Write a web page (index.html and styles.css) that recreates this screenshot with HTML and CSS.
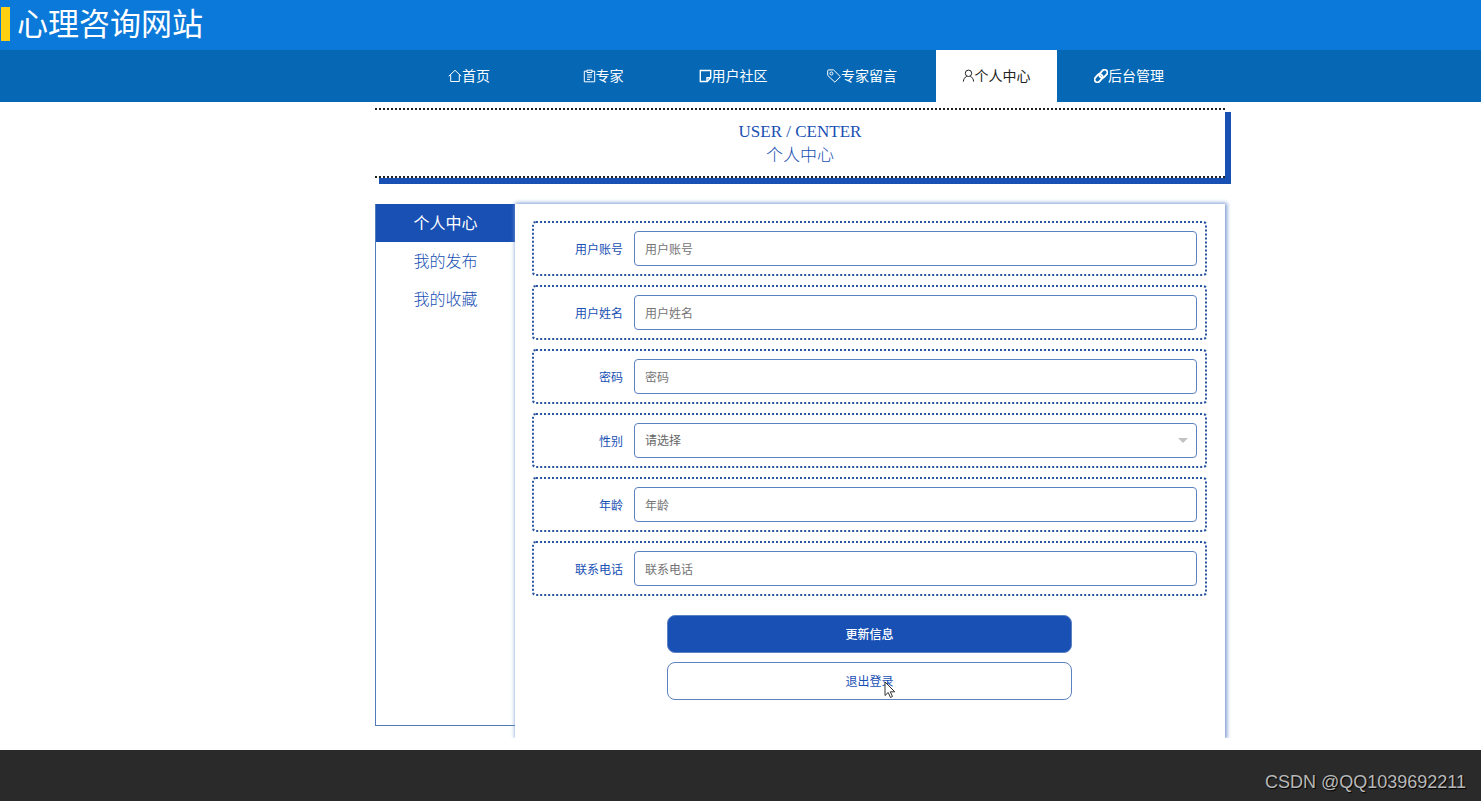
FILE: index.html
```
<!DOCTYPE html>
<html lang="zh-CN">
<head>
<meta charset="utf-8">
<meta name="viewport" content="width=device-width, initial-scale=1">
<title>心理咨询网站</title>
<link rel="stylesheet" href="styles.css">
</head>
<body>
<header class="site-header"><h1 class="site-title">心理咨询网站</h1></header>
<nav class="site-nav">
  <ul class="nav-list">
    <li><a class="nav-link" href="#"><svg class="icon" viewBox="0 0 14 14"><path d="M.7 7.200 7 1.300l6.300 5.900M2.700 6v6.500h8.600V6"/></svg>首页</a></li>
    <li><a class="nav-link" href="#"><svg class="icon icon-narrow" viewBox="0 0 13 14"><path d="M4 2.200H1.300v10.600h10.400V2.200H9M4 1.200h5v2.300H4zM4 5.800h5M4 8.100h5M4 10.400h3"/></svg>专家</a></li>
    <li><a class="nav-link" href="#"><svg class="icon icon-narrow icon-bold" viewBox="0 0 13 14"><path d="M1.300 1.500h10.400v7.400l-3.500 3.600H1.300zM8 12.300V8.800h3.600"/></svg>用户社区</a></li>
    <li><a class="nav-link" href="#"><svg class="icon" viewBox="0 0 14 14"><path d="M.7 1.900Q.7.900 1.700.9h4.800l6.900 6.800-5.500 5.500-7.200-6.800z"/><circle cx="4.400" cy="4.500" r="1.500"/></svg>专家留言</a></li>
    <li><a class="nav-link nav-link-active" href="#" aria-current="page"><svg class="icon icon-narrow" viewBox="0 0 13 14"><circle cx="6.500" cy="4.300" r="3.200"/><path d="M4.800 7.200C2.800 8.200 1.600 10 1.300 12.600M8.200 7.200c2 1 3.200 2.800 3.500 5.400"/></svg>个人中心</a></li>
    <li><a class="nav-link" href="#"><svg class="icon icon-heavy" viewBox="0 0 14 14"><g transform="rotate(-48 7 7)"><rect x="-.8" y="3.900" width="9" height="5.600" rx="2.800"/><rect x="5.800" y="4.500" width="9" height="5.600" rx="2.800"/></g></svg>后台管理</a></li>
  </ul>
</nav>
<main class="page">
  <div class="container">
    <div class="banner">
      <p class="banner-line">USER / CENTER</p>
      <h2 class="banner-line">个人中心</h2>
    </div>
    <div class="columns">
      <aside class="side">
        <a class="side-link side-link-active" href="#">个人中心</a>
        <a class="side-link" href="#">我的发布</a>
        <a class="side-link" href="#">我的收藏</a>
      </aside>
      <form class="panel">
        <div class="field"><label class="label" for="account">用户账号</label><input class="control" id="account" type="text" placeholder="用户账号"></div>
        <div class="field"><label class="label" for="name">用户姓名</label><input class="control" id="name" type="text" placeholder="用户姓名"></div>
        <div class="field"><label class="label" for="password">密码</label><input class="control" id="password" type="password" placeholder="密码"></div>
        <div class="field"><label class="label" for="gender">性别</label>
          <div class="select-box"><select class="control" id="gender"><option>请选择</option><option>男</option><option>女</option></select></div></div>
        <div class="field"><label class="label" for="age">年龄</label><input class="control" id="age" type="text" placeholder="年龄"></div>
        <div class="field"><label class="label" for="phone">联系电话</label><input class="control" id="phone" type="text" placeholder="联系电话"></div>
        <div class="actions">
          <button class="button button-primary" type="button">更新信息</button>
          <button class="button" type="button">退出登录<svg class="cursor" viewBox="0 0 12 18"><path d="M1 1v13.500l3.200-3 2.300 5 2-1-2.200-4.700H10.800z"/></svg></button>
        </div>
      </form>
    </div>
  </div>
</main>
<footer class="site-footer"><p class="credit">CSDN @QQ1039692211</p></footer>
</body>
</html>
```
FILE: styles.css
```
* { box-sizing: border-box; }

body {
  margin: 0;
  min-height: 100vh;
  display: flex;
  flex-direction: column;
  background: #fff;
  color: #1850b4;
  font: 12px/1.5 "Noto Sans CJK SC", sans-serif;
}

h1, h2, p, ul { margin: 0; padding: 0; font-weight: 400; }
a { color: inherit; text-decoration: none; }

.site-header {
  display: flex;
  align-items: center;
  height: 50px;
  padding: 0 1px 2px;
  background: #0a79d9;
}
.site-title {
  padding: 0 0 4px 7px;
  border-left: 9px solid #ffd012;
  color: #fff;
  font-size: 31px;
  line-height: 30px;
}

.site-nav {
  padding-left: 113px;
  background: #0668b5;
}
.nav-list {
  display: grid;
  grid-template-columns: 136px 132px 128px 130px 138px 128px;
  justify-content: center;
  list-style: none;
}
.nav-link {
  display: flex;
  align-items: center;
  justify-content: center;
  width: 121px;
  height: 52px;
  margin: 0 auto;
  padding-bottom: 1px;
  color: #fff;
  font-size: 14px;
}
.nav-link-active { background: #fff; color: #222; }

.icon {
  width: 14px;
  height: 14px;
  fill: none;
  stroke: currentColor;
  stroke-width: 1;
}
.icon-narrow { width: 13px; }
.icon-bold { stroke-width: 1.4; }
.icon-heavy { stroke-width: 1.9; }

.page { flex: 1; padding: 6px 0 12px 119px; }
.container { max-width: 850px; margin: 0 auto; }

.banner {
  padding: 10px 0 8px;
  border: dotted #222;
  border-width: 2px 0;
  background: #fff;
  box-shadow: 5px 5px 0 1px #1850b4;
  text-align: center;
}
.banner-line {
  font-family: "Liberation Serif", "Noto Sans CJK SC", serif;
  font-size: 17px;
  font-weight: 300;
  line-height: 24px;
}

.columns {
  display: flex;
  align-items: flex-start;
  margin-top: 26px;
}
.side {
  flex: none;
  align-self: stretch;
  width: 140px;
  margin-bottom: 12px;
  border: solid #5279b8;
  border-width: 0 0 1px 1px;
}
.side-link {
  display: block;
  padding-bottom: 2px;
  font-size: 16px;
  font-weight: 300;
  line-height: 36px;
  text-align: center;
}
.side-link-active { background: #1850b4; color: #fff; font-weight: 400; }

.panel {
  flex: 1;
  display: grid;
  gap: 9px;
  padding: 17px 18px 38px 17px;
  background: #fff;
  box-shadow: 1px 0 4px 1px #7c9cd4;
  clip-path: inset(-10px -10px 0 -10px);
}
.field {
  display: flex;
  align-items: center;
  padding: 8px;
  border: 2px dotted #2a55a0;
  border-radius: 4px;
}
.label { width: 81px; margin-right: 11px; text-align: right; }
.control {
  flex: 1;
  width: 100%;
  height: 35px;
  padding: 0 10px 1px;
  border: 1px solid #5d82c2;
  border-radius: 4px;
  background: #fff;
  color: #666;
  font: inherit;
  appearance: none;
}
.control::placeholder { color: #757575; opacity: 1; }
.select-box { position: relative; flex: 1; display: flex; }
.select-box::after {
  content: "";
  position: absolute;
  top: 15px;
  right: 9px;
  border: 5px solid transparent;
  border-top-color: #c2c2c2;
  pointer-events: none;
}

.actions {
  display: grid;
  gap: 9px;
  width: 60%;
  margin: 10px auto 0;
}
.button {
  position: relative;
  height: 38px;
  border: 1px solid #5d82c2;
  border-radius: 8px;
  background: #fff;
  color: #1850b4;
  font: inherit;
}
.button-primary { background: #1850b4; color: #fff; font-weight: 500; }
.cursor {
  position: absolute;
  top: 18px;
  left: calc(50% + 14px);
  width: 12px;
  height: 18px;
  fill: #fff;
  stroke: #333;
  stroke-width: 1;
}

.site-footer {
  min-height: 51px;
  padding: 20px 15px 0;
  background: #2a2a2a;
}
.credit {
  color: #b8b8b8;
  font: 18px/24px "Liberation Sans", sans-serif;
  text-align: right;
  text-shadow: 1px 1px 1px #000;
}
```
